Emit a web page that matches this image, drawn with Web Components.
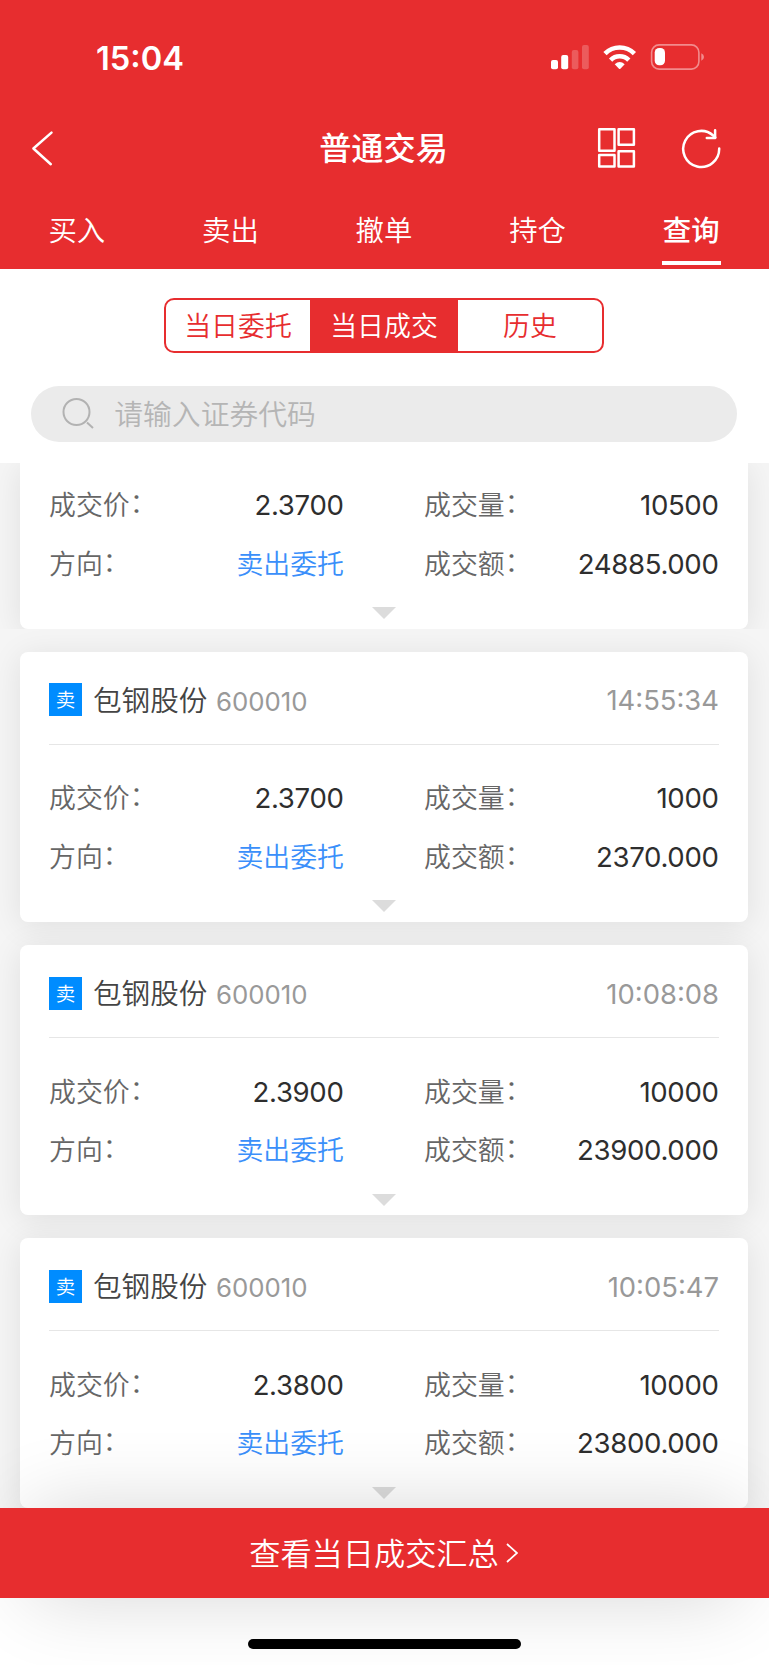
<!DOCTYPE html>
<html lang="zh-CN">
<head>
<meta charset="UTF-8">
<meta name="viewport" content="width=device-width, initial-scale=1">
<title>普通交易</title>
<style>
  body {
    margin: 0;
    background: #f5f5f5;
    font-family: Inter, "Noto Sans CJK SC", sans-serif;
    --red: #e72d2f;
  }
</style>
</head>
<body>
<trade-app>
  <status-bar slot="top" time="15:04"></status-bar>
  <nav-bar slot="top">普通交易</nav-bar>
  <tab-bar slot="top">
    <tab-item>买入</tab-item>
    <tab-item>卖出</tab-item>
    <tab-item>撤单</tab-item>
    <tab-item>持仓</tab-item>
    <tab-item active>查询</tab-item>
  </tab-bar>

  <segment-control slot="filter">
    <segment-item>当日委托</segment-item>
    <segment-item active>当日成交</segment-item>
    <segment-item>历史</segment-item>
  </segment-control>
  <search-box slot="filter">请输入证券代码</search-box>

  <trade-card scrolled price="2.3700" volume="10500" amount="24885.000"></trade-card>
  <trade-card name="包钢股份" code="600010" time="14:55:34" price="2.3700" volume="1000" amount="2370.000"></trade-card>
  <trade-card name="包钢股份" code="600010" time="10:08:08" price="2.3900" volume="10000" amount="23900.000"></trade-card>
  <trade-card name="包钢股份" code="600010" time="10:05:47" price="2.3800" volume="10000" amount="23800.000"></trade-card>

  <summary-bar slot="bottom">查看当日成交汇总</summary-bar>
  <home-indicator slot="bottom"></home-indicator>
</trade-app>

<script>
const define = (name, html, setup) => {
  const template = document.createElement('template');
  template.innerHTML = html;

  customElements.define(name, class extends HTMLElement {
    constructor() {
      super();
      const shadow = this.attachShadow({ mode: 'open' });
      shadow.appendChild(template.content.cloneNode(true));
    }

    connectedCallback() {
      if (setup) setup(this, this.shadowRoot);
    }
  });
};

define('trade-app', `
  <style>
  :host {
    display: flex;
    flex-direction: column;
    height: 1665px;
    overflow: hidden;
  }

  header {
    background: var(--red);
    color: #fff;
    height: 269px;
    flex: none;
  }

  .filter {
    background: #fff;
    height: 193.5px;
    flex: none;
    display: flex;
    flex-direction: column;
    align-items: center;
    gap: 32.5px;
    padding: 29px 1px 0 0;
    box-sizing: border-box;
  }

  main {
    flex: 1;
    min-height: 0;
    overflow: hidden;
    display: flex;
    flex-direction: column;
    gap: 23.4px;
  }

  footer {
    flex: none;
    height: 157.5px;
    background: #fff;
  }
  </style>

  <header><slot name="top"></slot></header>
  <div class="filter"><slot name="filter"></slot></div>
  <main><slot></slot></main>
  <footer><slot name="bottom"></slot></footer>
`);

define('status-bar', `
  <style>
  :host {
    display: flex;
    justify-content: space-between;
    align-items: center;
    height: 114px;
    padding: 0 63px 0 96px;
  }

  .time {
    font-size: 32.6px;
    font-weight: 600;
    line-height: 40px;
    padding-top: 1px;
  }

  svg {
    display: block;
  }
  </style>

  <div class="time"></div>
  <svg width="156" height="30" viewBox="550 42 156 30" fill="#fff">
    <rect x="551" y="60" width="7" height="9.3" rx="2"/>
    <rect x="561.2" y="55" width="7" height="14.3" rx="2"/>
    <rect x="571.8" y="50" width="6.6" height="19.3" rx="2" opacity=".22"/>
    <rect x="582" y="45" width="6.8" height="24.3" rx="2" opacity=".22"/>
    <g fill="none" stroke="#fff" stroke-width="4.6">
      <path d="M605 53.7a20.6 20.6 0 0 1 29.4 0"/>
      <path d="M610.6 60.1a12.8 12.8 0 0 1 18.2 0"/>
    </g>
    <path d="M614.7 64.2q5-4.2 10 0L620.4 68.7q-.7.6-1.4 0z"/>
    <rect x="651.6" y="44.9" width="47.3" height="24.2" rx="7.5" fill="none" stroke="#fff" stroke-width="1.6" opacity=".45"/>
    <rect x="654.7" y="48" width="10.3" height="17.3" rx="4.5"/>
    <path d="M701.3 53.3q2.7 1.3 2.7 3.7t-2.7 3.7z" opacity=".45"/>
  </svg>
`, (el, root) => {
  root.querySelector('.time').textContent = el.getAttribute('time');
});

define('nav-bar', `
  <style>
  :host {
    display: grid;
    grid-template-columns: 1fr auto 1fr;
    align-items: center;
    height: 68px;
    padding: 0 46px 0 30px;
  }

  h1 {
    margin: 0;
    padding: 2px 0 0 14px;
    font-size: 32.2px;
    line-height: 46px;
    font-weight: 500;
  }

  .actions {
    display: flex;
    justify-content: flex-end;
    gap: 44px;
  }

  svg {
    display: block;
    fill: none;
    stroke: #fff;
    stroke-width: 2.5;
    stroke-linecap: round;
    stroke-linejoin: round;
  }
  </style>

  <svg width="26" height="36" viewBox="0 0 26 36"><path d="M21.5 2.6 3.4 18.5 20.8 34.2"/></svg>
  <h1><slot></slot></h1>
  <div class="actions">
    <svg width="40" height="42" viewBox="597 127 40 42">
      <rect x="599.2" y="129.3" width="15.3" height="21.5"/>
      <rect x="618.6" y="129.3" width="15.3" height="15.5"/>
      <rect x="599.2" y="154.9" width="15.3" height="11.5"/>
      <rect x="618.6" y="151.2" width="15.3" height="15.2"/>
    </svg>
    <svg width="42" height="42" viewBox="681 127 42 42">
      <path d="M719.2 148.6a18 18 0 1 1-6-13.1l2 2"/>
      <path d="M715.1 130.2v7.7h-8.3"/>
    </svg>
  </div>
`);

define('tab-bar', `
  <style>
  :host {
    display: grid;
    grid-template-columns: repeat(5, 1fr);
    height: 87px;
    padding-right: 1px;
  }
  </style>
  <slot></slot>
`);

define('tab-item', `
  <style>
  :host {
    display: flex;
    flex-direction: column;
    align-items: center;
    justify-content: space-between;
    padding: 29px 0 4px;
    font-size: 28.4px;
    font-weight: 350;
    line-height: 40px;
  }

  :host([active]) {
    font-weight: 500;
  }

  :host([active])::after {
    content: "";
    width: 59px;
    height: 4px;
    background: #fff;
  }
  </style>
  <slot></slot>
`);

define('segment-control', `
  <style>
  :host {
    display: grid;
    grid-template-columns: 1fr 148px 1fr;
    width: 440px;
    height: 55px;
    box-sizing: border-box;
    border: 2px solid var(--red);
    border-radius: 10px;
    overflow: hidden;
  }
  </style>
  <slot></slot>
`);

define('segment-item', `
  <style>
  :host {
    display: flex;
    align-items: center;
    justify-content: center;
    padding-top: 1px;
    color: var(--red);
    font-size: 26.9px;
    font-weight: 350;
    line-height: 40px;
  }

  :host([active]) {
    background: var(--red);
    color: #fff;
  }
  </style>
  <slot></slot>
`);

define('search-box', `
  <style>
  :host {
    display: flex;
    align-items: center;
    gap: 20px;
    width: 705.5px;
    height: 56px;
    box-sizing: border-box;
    padding: 2px 0 0 31px;
    border-radius: 28px;
    background: #ebebeb;
    color: #b5b5b5;
    font-size: 28.8px;
    font-weight: 350;
    line-height: 40px;
  }

  svg {
    margin-bottom: 1px;
  }
  </style>
  <svg width="32" height="32" viewBox="0 0 32 32" fill="none" stroke="#b2b2b2" stroke-width="2">
    <circle cx="14.5" cy="14" r="13"/>
    <path d="m25 24.6 6 5.4"/>
  </svg>
  <slot></slot>
`);

define('trade-card', `
  <style>
  :host {
    display: block;
    flex: none;
    height: 269.9px;
    padding: 0 21px 0 20px;
  }

  :host([scrolled]) {
    height: 166px;
    overflow: hidden;
  }

  article {
    display: flex;
    flex-direction: column;
    height: 100%;
    box-sizing: border-box;
    padding: 0 29px 9.5px;
    background: #fff;
    border-radius: 8px;
    box-shadow: 0 4px 32px rgba(0, 0, 0, 0.09);
  }

  :host([scrolled]) article {
    border-radius: 0 0 8px 8px;
  }

  header {
    display: flex;
    align-items: center;
    height: 93px;
    padding-top: 4px;
    box-sizing: border-box;
    border-bottom: 1px solid #e6e6e6;
    margin-bottom: 24px;
  }

  .badge {
    width: 33px;
    height: 33px;
    margin-right: 11px;
    background: #008cff;
    color: #fff;
    font-size: 19.5px;
    font-weight: 350;
    line-height: 35px;
    text-align: center;
  }

  .name {
    color: #444;
    font-size: 28.6px;
    font-weight: 350;
    line-height: 40px;
    margin-right: 8.5px;
    padding-top: 2px;
  }

  .code {
    color: #999;
    font-size: 25.8px;
    line-height: 40px;
    padding-top: 4px;
  }

  .time {
    color: #999;
    font-size: 27.4px;
    line-height: 40px;
    padding-top: 1px;
    margin-left: auto;
  }

  .fields {
    display: grid;
    grid-template-columns: 295px 295px;
    justify-content: space-between;
    grid-auto-rows: 58.7px;
  }

  :host([scrolled]) .fields {
    margin-top: 13px;
  }

  .arrow {
    align-self: center;
    margin-top: auto;
  }
  </style>

  <article>
    <header>
      <div class="badge">卖</div>
      <div class="name"></div>
      <div class="code"></div>
      <div class="time"></div>
    </header>
    <div class="fields">
      <trade-field label="成交价" data-key="price"></trade-field>
      <trade-field label="成交量" data-key="volume"></trade-field>
      <trade-field label="方向" link>卖出委托</trade-field>
      <trade-field label="成交额" data-key="amount"></trade-field>
    </div>
    <svg class="arrow" width="24" height="12" viewBox="0 0 24 12"><path d="M0 0h24L12 12z" fill="#dcdcdc"/></svg>
  </article>
`, (el, root) => {
  if (el.hasAttribute('scrolled')) {
    root.querySelector('header').remove();
  } else {
    ['name', 'code', 'time'].forEach((key) => {
      root.querySelector('.' + key).textContent = el.getAttribute(key);
    });
  }
  root.querySelectorAll('[data-key]').forEach((field) => {
    field.textContent = el.getAttribute(field.dataset.key);
  });
});

define('trade-field', `
  <style>
  :host {
    display: flex;
    align-items: center;
    justify-content: space-between;
    color: #2e2e2e;
    font-size: 27.6px;
    letter-spacing: -0.35px;
    line-height: 40px;
  }

  .label {
    color: #666;
    font-size: 26.9px;
    font-weight: 350;
    letter-spacing: 0;
  }

  .colon {
    vertical-align: 2px;
    line-height: 1;
  }

  .value {
    padding-right: 0.5px;
  }

  :host([link]) .value {
    color: #3a8ffa;
    font-size: 26.9px;
    font-weight: 350;
    letter-spacing: 0;
    padding: 0;
  }
  </style>
  <span class="label"><span class="text"></span><span class="colon">：</span></span>
  <span class="value"><slot></slot></span>
`, (el, root) => {
  root.querySelector('.text').textContent = el.getAttribute('label');
});

define('summary-bar', `
  <style>
  :host {
    display: flex;
    align-items: center;
    justify-content: center;
    gap: 7px;
    height: 90px;
    box-sizing: border-box;
    padding: 2px 2px 0 0;
    position: relative;
    z-index: 0;
    color: #fff;
    font-size: 31.2px;
    font-weight: 350;
    line-height: 46px;
  }

  .bar, .shade {
    position: absolute;
    z-index: -1;
    inset: 0;
    background: var(--red);
  }

  /* narrower than the bar, so the shadow fades towards the screen edges */
  .shade {
    inset: 0 30px;
    box-shadow: 0 0 80px rgba(0, 0, 0, 0.16);
  }

  svg {
    margin-bottom: 2px;
  }
  </style>
  <div class="shade"></div>
  <div class="bar"></div>
  <slot></slot>
  <svg width="12" height="20" viewBox="0 0 12 20" fill="none" stroke="#fff" stroke-width="1.8"><path d="m1 1 10 9-10 9"/></svg>
`);

define('home-indicator', `
  <style>
  :host {
    display: block;
    position: relative;
    width: 273.5px;
    height: 10px;
    margin: 41px 0 0 247.5px;
    border-radius: 5px;
    background: #000;
  }
  </style>
`);
</script>
</body>
</html>
